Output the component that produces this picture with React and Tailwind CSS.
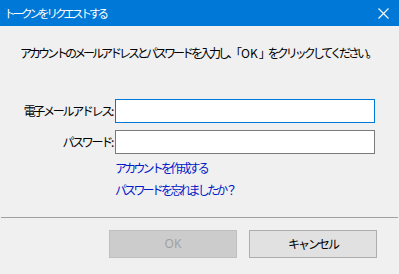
import React from 'react'

const font = { fontFamily: '"Noto Sans CJK JP", "Noto Sans", sans-serif' }

export default function App() {
  return (
    <div className="w-[399px] h-[274px] bg-[#f0f0f0] flex flex-col overflow-hidden text-[12px] leading-[16px] text-black" style={font}>
      {/* Title bar */}
      <div className="h-[26px] bg-[#0078d7] flex items-center justify-between pl-[4px] pr-[10px] shrink-0">
        <span className="text-white text-[11.5px] tracking-[-3px]">トークンをリクエストする</span>
        <svg width="11" height="11" viewBox="0 0 11 11">
          <path d="M0.5 0.5 L10.5 10.5 M10.5 0.5 L0.5 10.5" stroke="#fff" strokeWidth="1.1" />
        </svg>
      </div>

      {/* Instruction */}
      <p className="mt-[19px] pl-[20px] tracking-[-3px] whitespace-nowrap">
        アカウントのメールアドレスとパスワードを入力し、「<span className="tracking-normal ml-[2px] mr-[1px]">OK</span>」をクリックしてください。
      </p>

      {/* Form */}
      <div className="mt-[38px] flex flex-col gap-[7px]">
        <div className="flex items-center">
          <label className="w-[115px] pr-[3px] text-right tracking-[-2.3px] whitespace-nowrap">電子メールアドレス:</label>
          <input className="w-[260px] h-[24px] bg-white border border-[#0078d7] outline-none px-1" />
        </div>
        <div className="flex items-center">
          <label className="w-[115px] pr-[3px] text-right tracking-[-2.3px] whitespace-nowrap">パスワード:</label>
          <input type="password" className="w-[260px] h-[24px] bg-white border border-[#7a7a7a] outline-none px-1" />
        </div>
      </div>

      {/* Links */}
      <div className="pl-[115px] mt-[6px] flex flex-col gap-[6px] text-[#0019c8] tracking-[-2.8px]">
        <a className="whitespace-nowrap cursor-pointer">アカウントを作成する</a>
        <a className="whitespace-nowrap cursor-pointer">パスワードを忘れましたか？</a>
      </div>

      {/* Separator */}
      <div className="mt-[19px] h-px bg-[#a0a0a0] mx-[1px]" />

      {/* Buttons */}
      <div className="mt-[12px] pl-[109px] flex gap-[12px]">
        <button disabled className="w-[128px] h-[28px] bg-[#cccccc] border border-[#bfbfbf] text-[#a0a0a0]" style={{ fontFamily: '"Noto Sans", sans-serif' }}>
          OK
        </button>
        <button className="w-[128px] h-[28px] bg-[#e1e1e1] border border-[#adadad] text-black tracking-[-2px]">
          キャンセル
        </button>
      </div>
    </div>
  )
}
